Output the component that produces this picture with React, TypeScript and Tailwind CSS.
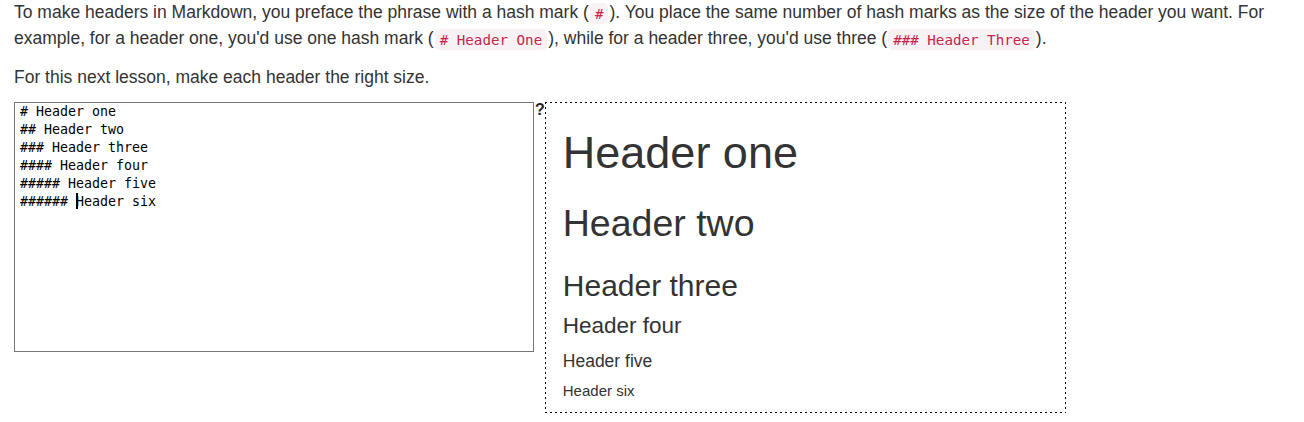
import React from 'react';

const lines = ['# Header one', '## Header two', '### Header three', '#### Header four', '##### Header five'];

function Code({ children }: { children: React.ReactNode }) {
  return (
    <code className="mx-px px-[5px] py-[2.5px] rounded-[5px] bg-[#f9f2f4] text-[#c7254e] text-[14.2px] font-['DejaVu_Sans_Mono',monospace]">
      {children}
    </code>
  );
}

export default function App() {
  return (
    <div className="px-[14px] text-[#333] text-[17.5px] leading-[25px] font-['Liberation_Sans',Arial,sans-serif] bg-white min-h-[422px]">
      <p className="mb-[12.5px]">
        To make headers in Markdown, you preface the phrase with a hash mark (<Code>#</Code>). You place the same number
        of hash marks as the size of the header you want. For example, for a header one, you'd use one hash mark (
        <Code># Header One</Code>), while for a header three, you'd use three (<Code>### Header Three</Code>).
      </p>
      <p className="mb-[12.5px]">For this next lesson, make each header the right size.</p>

      <div className="flex items-start">
        <div className="w-[520px] h-[250px] border border-[#767676] pl-[5px] text-[13.3px] leading-[18px] text-black font-['DejaVu_Sans_Mono',monospace] whitespace-pre">
          {lines.map((l) => (
            <div key={l}>{l}</div>
          ))}
          <div>
            {'###### '}
            <span className="inline-block w-[2px] h-[16px] bg-black align-[-3px] -mr-[2px]" />
            Header six
          </div>
        </div>
        <span className="ml-px text-[16px] leading-[15px] font-bold text-[#222]">?</span>
        <div className="w-[521px] px-[18px] py-px [background-image:linear-gradient(to_right,#000_40%,transparent_40%),linear-gradient(to_right,#000_40%,transparent_40%),linear-gradient(to_bottom,#000_40%,transparent_40%),linear-gradient(to_bottom,#000_40%,transparent_40%)] [background-size:5px_1px,5px_1px,1px_5px,1px_5px] [background-position:left_top,left_bottom,left_top,right_top] [background-repeat:repeat-x,repeat-x,repeat-y,repeat-y]">
          <h1 className="mt-[25px] mb-[12.5px] text-[45px] leading-[1.1]">Header one</h1>
          <h2 className="mt-[25px] mb-[12.5px] text-[37.5px] leading-[1.1]">Header two</h2>
          <h3 className="mt-[25px] mb-[12.5px] text-[30px] leading-[1.1]">Header three</h3>
          <h4 className="mt-[12.5px] mb-[12.5px] text-[22.5px] leading-[1.1]">Header four</h4>
          <h5 className="mt-[12.5px] mb-[12.5px] text-[17.5px] leading-[1.1]">Header five</h5>
          <h6 className="mt-[12.5px] mb-[12.5px] text-[15px] leading-[1.1]">Header six</h6>
        </div>
      </div>
    </div>
  );
}
